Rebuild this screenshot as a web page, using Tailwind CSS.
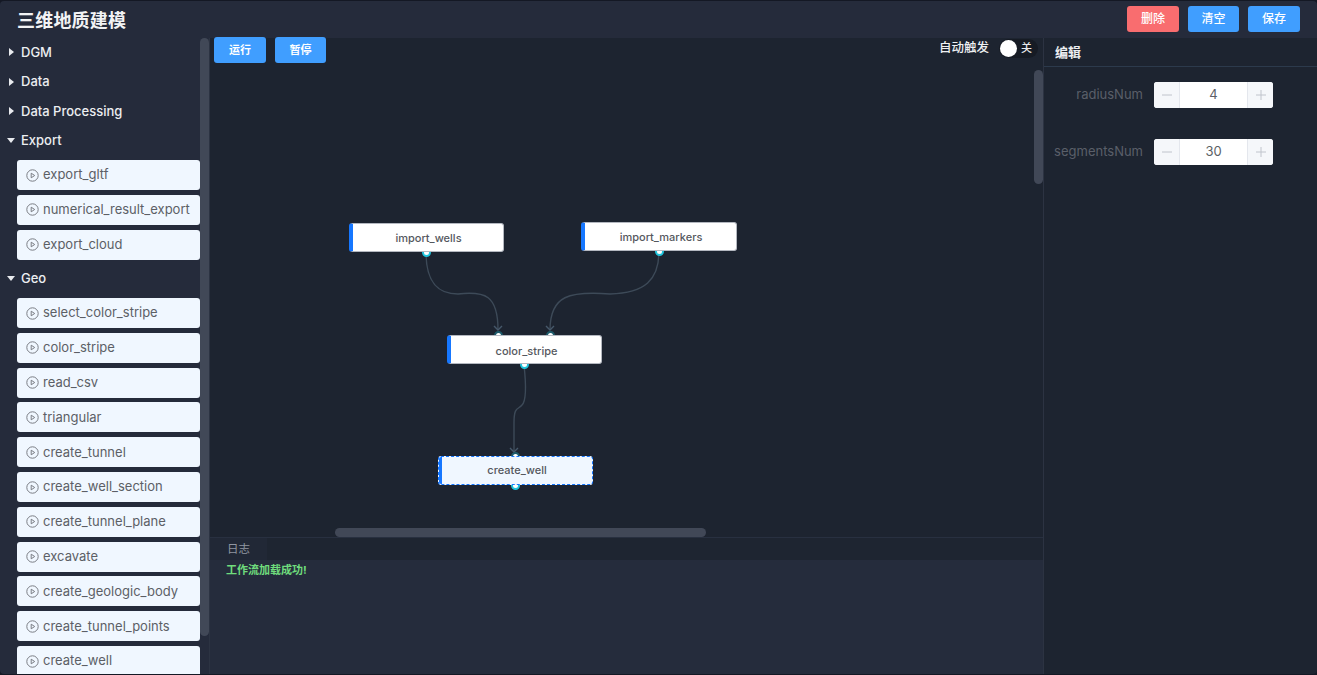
<!DOCTYPE html>
<html lang="en">
<head>
    <meta charset="UTF-8">
    <meta name="viewport" content="width=device-width, initial-scale=1.0">
    <title>三维地质建模</title>
    <script src="https://cdn.jsdelivr.net/npm/@tailwindcss/browser@4"></script>
</head>
<body class="bg-[#141824] h-[675px] w-[1317px] overflow-hidden pt-px font-['Inter','Noto_Sans_CJK_SC',sans-serif]">
    <div class="h-[673px] flex flex-col rounded-[4px] overflow-hidden">
        <!-- header -->
        <header class="h-[37px] shrink-0 bg-[#252b3b] flex items-center justify-between pl-[17px] pr-[17px]">
            <h1 class="text-[18px] font-bold text-[#f2f3f5] tracking-[0.2px] mt-px">三维地质建模</h1>
            <div class="flex gap-[9px] -mt-[1px]">
                <button class="w-[52px] h-[26px] rounded-[3px] bg-[#f96d6f] text-white text-[12px] font-medium">删除</button>
                <button class="w-[51px] h-[26px] rounded-[3px] bg-[#409eff] text-white text-[12px] font-medium">清空</button>
                <button class="w-[52px] h-[26px] rounded-[3px] bg-[#409eff] text-white text-[12px] font-medium">保存</button>
            </div>
        </header>

        <div class="flex flex-1 min-h-0">
            <!-- node list -->
            <aside class="relative w-[210px] shrink-0 bg-[#252b3b] border-r border-[#2c3342] overflow-hidden">
                <div class="absolute right-[0px] top-0 h-[598px] w-[9px] rounded-[5px] bg-[#414857]"></div>
                <div class="pl-[8px] -mt-[0.5px]">
                    <div class="h-[29.5px] flex items-center gap-[7px] text-[13px] font-medium text-[#eceef1]"><span class="w-0 h-0 ml-[1px] border-y-[4px] border-y-transparent border-l-[5px] border-l-[#e8eaee]"></span>DGM</div>
                    <div class="h-[29.5px] flex items-center gap-[7px] text-[13px] font-medium text-[#eceef1]"><span class="w-0 h-0 ml-[1px] border-y-[4px] border-y-transparent border-l-[5px] border-l-[#e8eaee]"></span>Data</div>
                    <div class="h-[29.5px] flex items-center gap-[7px] text-[13px] font-medium text-[#eceef1]"><span class="w-0 h-0 ml-[1px] border-y-[4px] border-y-transparent border-l-[5px] border-l-[#e8eaee]"></span>Data Processing</div>
                    <div class="h-[29.5px] flex items-center gap-[6px] text-[13px] font-medium text-[#eceef1]"><span class="w-0 h-0 -ml-[1px] border-x-[4px] border-x-transparent border-t-[5px] border-t-[#e8eaee]"></span>Export</div>
                </div>
                <ul class="pl-[17px] pr-[9px] flex flex-col gap-[4.8px] mt-[4.5px]">
                    <li class="h-[30px] rounded-[3px] bg-[#f0f7ff] flex items-center gap-[4px] pl-[9px] text-[13px] text-[#5c5f66]"><svg class="w-[13px] h-[13px]" viewBox="0 0 13 13" fill="none" stroke="#7a7d84"><circle cx="6.5" cy="6.5" r="5.7"/><path d="M5.2 4.2 8.7 6.5 5.2 8.8Z"/></svg>export_gltf</li>
                    <li class="h-[30px] rounded-[3px] bg-[#f0f7ff] flex items-center gap-[4px] pl-[9px] text-[13px] text-[#5c5f66]"><svg class="w-[13px] h-[13px]" viewBox="0 0 13 13" fill="none" stroke="#7a7d84"><circle cx="6.5" cy="6.5" r="5.7"/><path d="M5.2 4.2 8.7 6.5 5.2 8.8Z"/></svg>numerical_result_export</li>
                    <li class="h-[30px] rounded-[3px] bg-[#f0f7ff] flex items-center gap-[4px] pl-[9px] text-[13px] text-[#5c5f66]"><svg class="w-[13px] h-[13px]" viewBox="0 0 13 13" fill="none" stroke="#7a7d84"><circle cx="6.5" cy="6.5" r="5.7"/><path d="M5.2 4.2 8.7 6.5 5.2 8.8Z"/></svg>export_cloud</li>
                </ul>
                <div class="pl-[8px] mt-[4px]">
                    <div class="h-[29.5px] flex items-center gap-[6px] text-[13px] font-medium text-[#eceef1]"><span class="w-0 h-0 -ml-[1px] border-x-[4px] border-x-transparent border-t-[5px] border-t-[#e8eaee]"></span>Geo</div>
                </div>
                <ul class="pl-[17px] pr-[9px] flex flex-col gap-[4.8px] mt-[5px]">
                    <li class="h-[30px] rounded-[3px] bg-[#f0f7ff] flex items-center gap-[4px] pl-[9px] text-[13px] text-[#5c5f66]"><svg class="w-[13px] h-[13px]" viewBox="0 0 13 13" fill="none" stroke="#7a7d84"><circle cx="6.5" cy="6.5" r="5.7"/><path d="M5.2 4.2 8.7 6.5 5.2 8.8Z"/></svg>select_color_stripe</li>
                    <li class="h-[30px] rounded-[3px] bg-[#f0f7ff] flex items-center gap-[4px] pl-[9px] text-[13px] text-[#5c5f66]"><svg class="w-[13px] h-[13px]" viewBox="0 0 13 13" fill="none" stroke="#7a7d84"><circle cx="6.5" cy="6.5" r="5.7"/><path d="M5.2 4.2 8.7 6.5 5.2 8.8Z"/></svg>color_stripe</li>
                    <li class="h-[30px] rounded-[3px] bg-[#f0f7ff] flex items-center gap-[4px] pl-[9px] text-[13px] text-[#5c5f66]"><svg class="w-[13px] h-[13px]" viewBox="0 0 13 13" fill="none" stroke="#7a7d84"><circle cx="6.5" cy="6.5" r="5.7"/><path d="M5.2 4.2 8.7 6.5 5.2 8.8Z"/></svg>read_csv</li>
                    <li class="h-[30px] rounded-[3px] bg-[#f0f7ff] flex items-center gap-[4px] pl-[9px] text-[13px] text-[#5c5f66]"><svg class="w-[13px] h-[13px]" viewBox="0 0 13 13" fill="none" stroke="#7a7d84"><circle cx="6.5" cy="6.5" r="5.7"/><path d="M5.2 4.2 8.7 6.5 5.2 8.8Z"/></svg>triangular</li>
                    <li class="h-[30px] rounded-[3px] bg-[#f0f7ff] flex items-center gap-[4px] pl-[9px] text-[13px] text-[#5c5f66]"><svg class="w-[13px] h-[13px]" viewBox="0 0 13 13" fill="none" stroke="#7a7d84"><circle cx="6.5" cy="6.5" r="5.7"/><path d="M5.2 4.2 8.7 6.5 5.2 8.8Z"/></svg>create_tunnel</li>
                    <li class="h-[30px] rounded-[3px] bg-[#f0f7ff] flex items-center gap-[4px] pl-[9px] text-[13px] text-[#5c5f66]"><svg class="w-[13px] h-[13px]" viewBox="0 0 13 13" fill="none" stroke="#7a7d84"><circle cx="6.5" cy="6.5" r="5.7"/><path d="M5.2 4.2 8.7 6.5 5.2 8.8Z"/></svg>create_well_section</li>
                    <li class="h-[30px] rounded-[3px] bg-[#f0f7ff] flex items-center gap-[4px] pl-[9px] text-[13px] text-[#5c5f66]"><svg class="w-[13px] h-[13px]" viewBox="0 0 13 13" fill="none" stroke="#7a7d84"><circle cx="6.5" cy="6.5" r="5.7"/><path d="M5.2 4.2 8.7 6.5 5.2 8.8Z"/></svg>create_tunnel_plane</li>
                    <li class="h-[30px] rounded-[3px] bg-[#f0f7ff] flex items-center gap-[4px] pl-[9px] text-[13px] text-[#5c5f66]"><svg class="w-[13px] h-[13px]" viewBox="0 0 13 13" fill="none" stroke="#7a7d84"><circle cx="6.5" cy="6.5" r="5.7"/><path d="M5.2 4.2 8.7 6.5 5.2 8.8Z"/></svg>excavate</li>
                    <li class="h-[30px] rounded-[3px] bg-[#f0f7ff] flex items-center gap-[4px] pl-[9px] text-[13px] text-[#5c5f66]"><svg class="w-[13px] h-[13px]" viewBox="0 0 13 13" fill="none" stroke="#7a7d84"><circle cx="6.5" cy="6.5" r="5.7"/><path d="M5.2 4.2 8.7 6.5 5.2 8.8Z"/></svg>create_geologic_body</li>
                    <li class="h-[30px] rounded-[3px] bg-[#f0f7ff] flex items-center gap-[4px] pl-[9px] text-[13px] text-[#5c5f66]"><svg class="w-[13px] h-[13px]" viewBox="0 0 13 13" fill="none" stroke="#7a7d84"><circle cx="6.5" cy="6.5" r="5.7"/><path d="M5.2 4.2 8.7 6.5 5.2 8.8Z"/></svg>create_tunnel_points</li>
                    <li class="h-[30px] rounded-[3px] bg-[#f0f7ff] flex items-center gap-[4px] pl-[9px] text-[13px] text-[#5c5f66]"><svg class="w-[13px] h-[13px]" viewBox="0 0 13 13" fill="none" stroke="#7a7d84"><circle cx="6.5" cy="6.5" r="5.7"/><path d="M5.2 4.2 8.7 6.5 5.2 8.8Z"/></svg>create_well</li>
                </ul>
            </aside>

            <!-- canvas + log -->
            <main class="w-[834px] shrink-0 flex flex-col border-r border-[#2c3342]">
                <div class="relative h-[499px] shrink-0 bg-[#1d2430]">
                    <div class="relative z-10 flex items-start justify-between pl-[4px] pr-[5px]">
                        <div class="flex gap-[9px] -mt-px">
                            <button class="w-[52px] h-[26px] rounded-[3px] bg-[#409eff] text-white text-[11px] font-bold">运行</button>
                            <button class="w-[51px] h-[26px] rounded-[3px] bg-[#409eff] text-white text-[11px] font-bold">暂停</button>
                        </div>
                        <div class="flex items-center gap-[10px] mt-[1px]">
                            <span class="text-[12.5px] font-medium text-[#f0f1f3]">自动触发</span>
                            <div class="w-[39px] h-[19px] rounded-full bg-[#161b24] flex items-center pl-[1px] gap-[4px]">
                                <span class="w-[17px] h-[17px] rounded-full bg-white"></span>
                                <span class="text-[11px] font-medium text-[#e6e8eb]">关</span>
                            </div>
                        </div>
                    </div>

                    <svg class="absolute inset-0 w-full h-full" viewBox="0 0 833 499" fill="none" stroke="#3d4a58" stroke-width="1.4">
                        <path d="M216 214C216 247 230 256 248 256C275 253 288 257 288 292"/>
                        <path d="M449 213C449 242 435 255 400 256C360 253 340 257 340 292"/>
                        <path d="M314 327C316 345 317 362 312 367C308 372 304 368 304 385L304 414"/>
                        <path d="M284 288 288 292 292 288M336 288 340 292 344 288M300 410 304 414 308 410" stroke="#46586a"/>
                    </svg>

                    <!-- ports -->
                    <span class="absolute left-[211.5px] top-[209.5px] w-[9px] h-[9px] rounded-full bg-white border-2 border-[#1fc4dc]"></span>
                    <span class="absolute left-[444.5px] top-[208.5px] w-[9px] h-[9px] rounded-full bg-white border-2 border-[#1fc4dc]"></span>
                    <span class="absolute left-[283.5px] top-[292.5px] w-[9px] h-[9px] rounded-full bg-white border-2 border-[#1d5a6a]"></span>
                    <span class="absolute left-[335.5px] top-[292.5px] w-[9px] h-[9px] rounded-full bg-white border-2 border-[#1d5a6a]"></span>
                    <span class="absolute left-[309.5px] top-[321.5px] w-[9px] h-[9px] rounded-full bg-white border-2 border-[#1fc4dc]"></span>
                    <span class="absolute left-[300.5px] top-[413.5px] w-[9px] h-[9px] rounded-full bg-white border-2 border-[#1d5a6a]"></span>
                    <span class="absolute left-[300.5px] top-[442.5px] w-[9px] h-[9px] rounded-full bg-white border-2 border-[#1fc4dc]"></span>

                    <!-- nodes -->
                    <div class="absolute left-[139px] top-[185px] w-[155px] h-[29px] rounded-[3px] bg-white border border-[#b4b8c0] border-l-[4px] border-l-[#1677ff] flex items-center justify-center pt-px pl-px text-[11px] text-[#55585e] font-medium">import_wells</div>
                    <div class="absolute left-[371px] top-[184px] w-[156px] h-[29px] rounded-[3px] bg-white border border-[#b4b8c0] border-l-[4px] border-l-[#1677ff] flex items-center justify-center pt-px pl-px text-[11px] text-[#55585e] font-medium">import_markers</div>
                    <div class="absolute left-[237px] top-[297px] w-[155px] h-[29px] rounded-[3px] bg-white border border-[#b4b8c0] border-l-[4px] border-l-[#1677ff] flex items-center justify-center pt-[3px] pl-px text-[11px] text-[#55585e] font-medium">color_stripe</div>
                    <div class="absolute left-[228px] top-[418px] w-[155px] h-[29px] rounded-[3px] bg-[#f0f7ff] border border-dashed border-[#1677ff] overflow-hidden flex items-center justify-center pl-[3px] text-[11px] text-[#55585e] font-medium"><span class="absolute left-0 inset-y-0 w-[3px] bg-[#1677ff]"></span>create_well</div>

                    <!-- canvas scrollbars -->
                    <div class="absolute left-[824px] top-[32px] w-[9px] h-[114px] rounded-[5px] bg-[#414857]"></div>
                    <div class="absolute left-[125px] top-[490px] w-[371px] h-[9px] rounded-[5px] bg-[#414857]"></div>
                </div>

                <div class="border-t border-[#283040] h-[23px] shrink-0 bg-[#1e2531] flex">
                    <div class="w-[57px] bg-[#212836] flex items-center justify-center text-[11.5px] text-[#9096a0] pt-[2px]">日志</div>
                </div>
                <div class="flex-1 bg-[#252c3c] pl-[16px] pt-[2px] text-[11px] leading-[16px] font-bold text-[#6fdc7c]">工作流加载成功!</div>
            </main>

            <!-- editor panel -->
            <section class="flex-1 bg-[#1d2430]">
                <div class="h-[29px] border-b border-[#2c3a4c] flex items-center pl-[11px] pt-[2px] text-[13px] font-bold text-[#eceef1]">编辑</div>
                <div class="mt-[15px] flex flex-col gap-[31px]">
                    <div class="flex items-center">
                        <label class="w-[99px] text-right text-[13px] text-[#5a5f69]">radiusNum</label>
                        <div class="ml-[11px] w-[119px] h-[26px] rounded-[3px] bg-white flex items-center text-[13px] text-[#5c5f66]">
                            <span class="w-[26px] h-full rounded-l-[3px] bg-[#f5f7fa] border-r border-[#e4e7ed] flex items-center justify-center"><svg class="w-[10px] h-[10px]" viewBox="0 0 10 10" stroke="#c0c4cc"><path d="M0 5H10"/></svg></span>
                            <span class="flex-1 text-center">4</span>
                            <span class="w-[26px] h-full rounded-r-[3px] bg-[#f5f7fa] border-l border-[#e4e7ed] flex items-center justify-center"><svg class="w-[10px] h-[10px]" viewBox="0 0 10 10" stroke="#c0c4cc"><path d="M0 5H10M5 0V10"/></svg></span>
                        </div>
                    </div>
                    <div class="flex items-center">
                        <label class="w-[99px] text-right text-[13px] text-[#5a5f69]">segmentsNum</label>
                        <div class="ml-[11px] w-[119px] h-[26px] rounded-[3px] bg-white flex items-center text-[13px] text-[#5c5f66]">
                            <span class="w-[26px] h-full rounded-l-[3px] bg-[#f5f7fa] border-r border-[#e4e7ed] flex items-center justify-center"><svg class="w-[10px] h-[10px]" viewBox="0 0 10 10" stroke="#c0c4cc"><path d="M0 5H10"/></svg></span>
                            <span class="flex-1 text-center">30</span>
                            <span class="w-[26px] h-full rounded-r-[3px] bg-[#f5f7fa] border-l border-[#e4e7ed] flex items-center justify-center"><svg class="w-[10px] h-[10px]" viewBox="0 0 10 10" stroke="#c0c4cc"><path d="M0 5H10M5 0V10"/></svg></span>
                        </div>
                    </div>
                </div>
            </section>
        </div>
    </div>
</body>
</html>
